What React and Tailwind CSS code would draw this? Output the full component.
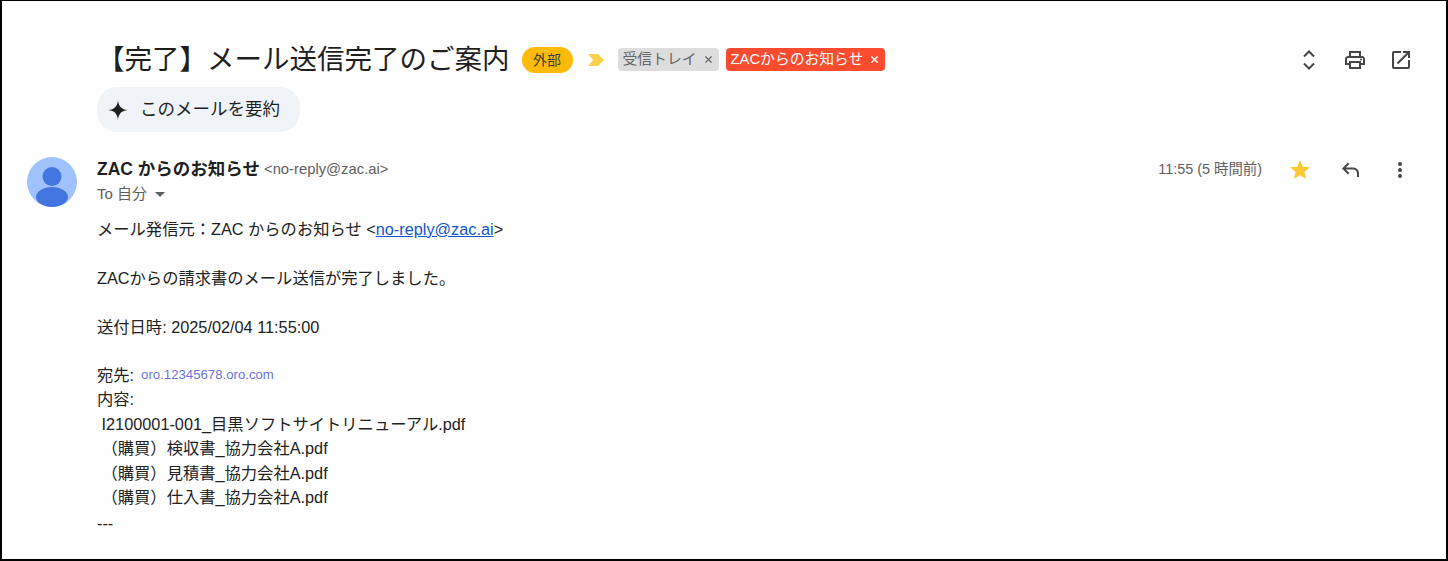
import { X } from "lucide-react"

const BODY_LINES = [
  " I2100001-001_目黒ソフトサイトリニューアル.pdf",
  " （購買）検収書_協力会社A.pdf",
  " （購買）見積書_協力会社A.pdf",
  " （購買）仕入書_協力会社A.pdf",
]

function Sparkle() {
  return (
    <svg viewBox="0 0 24 24" className="h-[22px] w-[22px] text-[#1f1f1f]" fill="currentColor">
      <path d="M12 1.5C12.8 8 16 11.2 22.5 12 16 12.8 12.8 16 12 22.5 11.2 16 8 12.8 1.5 12 8 11.2 11.2 8 12 1.5Z" />
    </svg>
  )
}

function ExpandIcon() {
  return (
    <svg viewBox="0 0 24 24" className="h-6 w-6" fill="none" stroke="#444746" strokeWidth="2">
      <path d="M7 8.5l5-5 5 5M7 15.5l5 5 5-5" />
    </svg>
  )
}

function PrintIcon() {
  return (
    <svg viewBox="0 0 24 24" className="h-6 w-6" fill="#444746">
      <path d="M19 8h-1V3H6v5H5c-1.66 0-3 1.34-3 3v6h4v4h12v-4h4v-6c0-1.66-1.34-3-3-3zM8 5h8v3H8V5zm8 14H8v-4h8v4zm2-4v-2H6v2H4v-4c0-.55.45-1 1-1h14c.55 0 1 .45 1 1v4h-2z" />
      <circle cx="18" cy="11.5" r="1" />
    </svg>
  )
}

function OpenIcon() {
  return (
    <svg viewBox="0 0 24 24" className="h-6 w-6" fill="#444746">
      <path d="M19 19H5V5h7V3H5a2 2 0 0 0-2 2v14a2 2 0 0 0 2 2h14a2 2 0 0 0 2-2v-7h-2v7zM14 3v2h3.59l-9.83 9.83 1.41 1.41L19 6.41V10h2V3h-7z" />
    </svg>
  )
}

function ReplyIcon() {
  return (
    <svg viewBox="0 0 24 24" className="h-6 w-6" fill="#444746">
      <path d="M21 19h-2v-3.5c0-2.5-1.5-4-4-4H7.8l3.6 3.6L10 16.5 4 10.5l6-6 1.4 1.4-3.6 3.6H15c3.6 0 6 2.4 6 6V19z" />
    </svg>
  )
}

function MoreIcon() {
  return (
    <svg viewBox="0 0 24 24" className="h-6 w-6" fill="#444746">
      <circle cx="12" cy="6" r="2" />
      <circle cx="12" cy="12" r="2" />
      <circle cx="12" cy="18" r="2" />
    </svg>
  )
}

function StarIcon() {
  return (
    <svg viewBox="0 0 24 24" className="h-6 w-6" fill="#fcc934">
      <path d="M12 17.27 18.18 21l-1.64-7.03L22 9.24l-7.19-.61L12 2 9.19 8.63 2 9.24l5.46 4.73L5.82 21z" />
    </svg>
  )
}

function Avatar() {
  return (
    <svg viewBox="0 0 50 50" className="h-[50px] w-[50px] shrink-0">
      <circle cx="25" cy="25" r="25" fill="#a0c3ff" />
      <circle cx="25" cy="19.5" r="9.5" fill="#4375e0" />
      <ellipse cx="25" cy="40" rx="16" ry="10" fill="#4375e0" />
    </svg>
  )
}

export default function App() {
  return (
    <div className="h-[561px] w-[1448px] overflow-hidden border-t border-r-2 border-b-2 border-l-2 border-black bg-white font-['Liberation_Sans','Noto_Sans_CJK_JP',sans-serif] text-[#222]">
      {/* Cabecera */}
      <div className="flex items-start justify-between pt-[42px] pr-[33px] pl-[95px]">
        <div className="flex flex-col items-start">
          <div className="flex h-[34px] items-center">
            <h1 className="text-[27.5px] font-normal whitespace-nowrap text-[#1f1f1f]">【完了】メール送信完了のご案内</h1>
            <span className="ml-[12px] flex h-[26px] w-[51px] items-center justify-center rounded-full bg-[#fdbb05] text-[14px] text-[#3c3c3c]">外部</span>
            <svg viewBox="0 0 18 14" className="ml-[14px] h-[14px] w-[18px]" fill="#fcd04f">
              <path d="M1 1h10l6 6-6 6H1l5-6z" />
            </svg>
            <span className="mb-[2px] ml-[13px] flex h-[23px] items-center gap-[6px] rounded-[4px] bg-[#dddddd] pr-[5px] pl-[5px] text-[14.8px] text-[#666]">
              受信トレイ
              <X size={11} strokeWidth={2.5} className="text-[#666]" />
            </span>
            <span className="mb-[2px] ml-[7px] flex h-[23px] items-center gap-[6px] rounded-[4px] bg-[#fb4c2f] pr-[5px] pl-[5px] text-[14.8px] text-white">
              ZACからのお知らせ
              <X size={11} strokeWidth={3} className="text-white" />
            </span>
          </div>
          <button className="mt-[10px] flex h-[45px] w-[203px] items-center gap-[11px] rounded-[20px] bg-[#f0f4f9] pl-[10px] text-[17.5px] text-[#1f1f1f]">
            <Sparkle />
            <span>このメールを要約</span>
          </button>
        </div>
        <div className="flex items-center gap-[22px] pt-[5px]">
          <ExpandIcon />
          <PrintIcon />
          <OpenIcon />
        </div>
      </div>

      {/* Remitente */}
      <div className="mt-[25px] flex pr-[34px] pl-[25px]">
        <Avatar />
        <div className="ml-[20px] flex-1">
          <div className="flex items-start justify-between">
            <div>
              <div className="flex h-[24px] items-center whitespace-nowrap">
                <span className="text-[17.5px] font-bold text-[#1f1f1f]">ZAC からのお知らせ</span>
                <span className="ml-[4px] text-[14.8px] text-[#5e5e5e]">&lt;no-reply@zac.ai&gt;</span>
              </div>
              <div className="mt-[1px] flex h-[24px] items-center text-[15px] text-[#5e5e5e]">
                To 自分
                <svg viewBox="0 0 10 5" className="ml-[8px] h-[5px] w-[10px]" fill="#5e5e5e">
                  <path d="M0 0h10L5 5z" />
                </svg>
              </div>
            </div>
            <div className="flex items-center pt-[1px]">
              <span className="text-[14.4px] whitespace-nowrap text-[#5e5e5e]">11:55 (5 時間前)</span>
              <div className="ml-[26px] flex items-center gap-[26px]">
                <StarIcon />
                <ReplyIcon />
                <MoreIcon />
              </div>
            </div>
          </div>

          {/* Cuerpo */}
          <div className="mt-[11px] text-[16.3px] leading-[24.5px] whitespace-pre text-[#222]">
            <p>
              メール発信元：ZAC からのお知らせ &lt;
              <a className="text-[#1155cc] underline">no-reply@zac.ai</a>&gt;
            </p>
            <p className="mt-[24.5px]">ZACからの請求書のメール送信が完了しました。</p>
            <p className="mt-[24.5px]">送付日時: 2025/02/04 11:55:00</p>
            <p className="mt-[23px] flex items-center">
              宛先:
              <span className="ml-[7px] text-[13.2px] text-[#6b74dd]">oro.12345678.oro.com</span>
            </p>
            <p>内容:</p>
            {BODY_LINES.map((line) => (
              <p key={line}>{line}</p>
            ))}
            <p className="mt-[1px]">---</p>
          </div>
        </div>
      </div>
    </div>
  )
}
